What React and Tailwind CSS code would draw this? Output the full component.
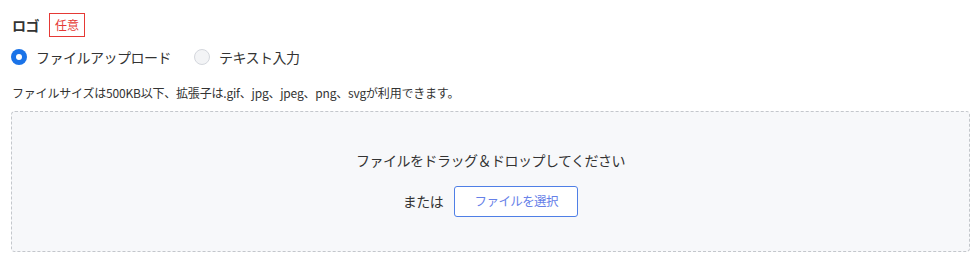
import React, { useState } from "react";

const FONT = { fontFamily: '"Noto Sans CJK JP", "Noto Sans", sans-serif' };

function Radio({ checked, label, onClick }) {
  return (
    <label className="flex items-center cursor-pointer" onClick={onClick}>
      {checked ? (
        <span className="w-[16px] h-[16px] rounded-full bg-[#1a73e8] flex items-center justify-center">
          <span className="w-[6px] h-[6px] rounded-full bg-white" />
        </span>
      ) : (
        <span className="w-[16px] h-[16px] rounded-full border border-[#d4d7dd] bg-[#f3f4f6]" />
      )}
      <span className="ml-[9px] text-[14px] tracking-[-0.5px] text-[#333333] leading-[20px]">{label}</span>
    </label>
  );
}

export default function App() {
  const [mode, setMode] = useState("file");

  return (
    <div className="w-[980px] h-[259px] bg-white px-[11px]" style={FONT}>
      {/* Label */}
      <div className="flex items-center pt-[13px] h-[37px]">
        <span className="ml-[1px] text-[14px] font-bold text-[#333333] tracking-[-0.5px]">ロゴ</span>
        <span className="ml-[10px] w-[36px] h-[24px] border border-[#e53935] text-[#e53935] text-[12px] flex items-center justify-center">
          任意
        </span>
      </div>

      {/* Type choice */}
      <div className="flex items-center gap-[23px] mt-[10px] h-[20px]">
        <Radio checked={mode === "file"} label="ファイルアップロード" onClick={() => setMode("file")} />
        <Radio checked={mode === "text"} label="テキスト入力" onClick={() => setMode("text")} />
      </div>

      <p className="mt-[18px] ml-[1px] text-[12px] leading-[16px] tracking-[-0.2px] text-[#333333]">
        ファイルサイズは500KB以下、拡張子は.gif、jpg、jpeg、png、svgが利用できます。
      </p>

      {/* Drop zone */}
      <div className="mt-[10px] w-[959px] h-[141px] rounded-[4px] border border-dashed border-[#c4c7cc] bg-[#f7f8fa] flex flex-col items-center pt-[36px]">
        <p className="text-[14px] leading-[24px] tracking-[-0.5px] text-[#333333]">ファイルをドラッグ＆ドロップしてください</p>
        <div className="flex items-center mt-[14px]">
          <span className="text-[14px] tracking-[-0.5px] text-[#333333]">または</span>
          <button className="ml-[11px] w-[124px] h-[31px] rounded-[3px] border border-[#4f7fe6] bg-white text-[12.5px] tracking-[-0.6px] text-[#6680e8]">
            ファイルを選択
          </button>
        </div>
      </div>
    </div>
  );
}
